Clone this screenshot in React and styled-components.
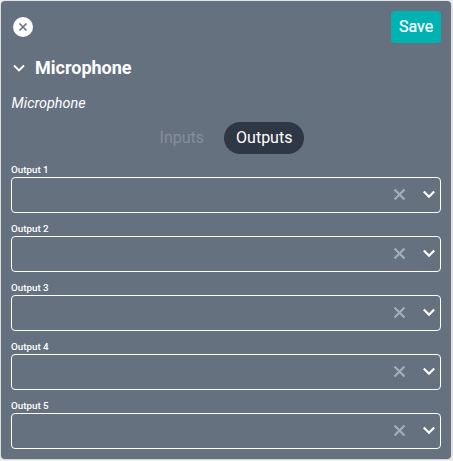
import React from "react";
import styled, { createGlobalStyle } from "styled-components";

const GlobalStyle = createGlobalStyle`
  *, *::before, *::after { box-sizing: border-box; }
  body {
    margin: 0;
    background: #f1f1f1;
    font-family: Roboto, sans-serif;
    color: #fff;
    overflow: hidden;
  }
  button { font: inherit; color: inherit; border: 0; padding: 0; background: none; }
  svg { display: block; flex: none; }
`;

const Panel = styled.main`
  width: 450px;
  height: 458px;
  margin: 1px;
  padding: 10px;
  background: #66717f;
  border-radius: 4px;
  box-shadow: 0 1px 4px rgba(0, 0, 0, 0.2);
`;

const Toolbar = styled.header`
  display: flex;
  align-items: center;
  justify-content: space-between;
  height: 32px;
`;

const CloseButton = styled.button`
  width: 24px;
  height: 24px;
`;

const SaveButton = styled.button`
  width: 50px;
  height: 32px;
  background: #00b2b2;
  border-radius: 4px;
  font-size: 16px;
  font-weight: 400;
  line-height: 20px;
  -webkit-text-stroke: 0.2px #fff;
`;

const SectionHeader = styled.div`
  display: flex;
  align-items: center;
  gap: 8px;
  height: 24px;
  margin-top: 13px;
`;

const Title = styled.h2`
  margin: 0;
  font-size: 18px;
  font-weight: 700;
  line-height: 24px;
`;

const Subtitle = styled.p`
  margin: 14px 0 0;
  padding-left: 0.6px;
  font-size: 14.4px;
  font-style: italic;
  line-height: 20px;
`;

const Tabs = styled.div`
  display: flex;
  justify-content: center;
  gap: 8px;
  height: 32px;
  margin-top: 8px;
`;

const Tab = styled.button`
  height: 32px;
  padding: 0 12px;
  border-radius: 16px;
  font-size: 16px;
  line-height: 32px;
  background: ${({ $active }) => ($active ? "#2f3644" : "transparent")};
  color: ${({ $active }) => ($active ? "#fff" : "#848d9b")};
`;

const Fields = styled.div`
  display: grid;
  gap: 8px;
  margin-top: 8px;
`;

const Field = styled.div`
  height: 51px;
`;

const Label = styled.div`
  height: 15px;
  font-size: 9.8px;
  font-weight: 500;
  line-height: 15px;
`;

const SelectBox = styled.div`
  display: flex;
  align-items: center;
  justify-content: flex-end;
  gap: 9px;
  height: 36px;
  padding: 0 1px 2px 0;
  border: 1px solid #fff;
  border-radius: 4px;
`;

const CloseIcon = () => (
  <svg width="24" height="24" viewBox="0 0 24 24">
    <circle cx="12" cy="12" r="10" fill="#fff" />
    <path d="M8.5 8.5l7 7M15.5 8.5l-7 7" stroke="#66717f" strokeWidth="1.6" />
  </svg>
);

const CollapseIcon = () => (
  <svg width="16" height="16" viewBox="0 0 16 16">
    <path d="M3 5.5l5 5 5-5" fill="none" stroke="#fff" strokeWidth="1.8" />
  </svg>
);

const ClearIcon = () => (
  <svg width="20" height="20" viewBox="0 0 20 20">
    <path d="M4.5 5.5l10 10M14.5 5.5l-10 10" stroke="#a4adbd" strokeWidth="2.2" />
  </svg>
);

const DropdownIcon = () => (
  <svg width="20" height="20" viewBox="0 0 20 20">
    <path d="M4.8 7.5l5.2 5.2 5.2-5.2" fill="none" stroke="#fff" strokeWidth="2.2" />
  </svg>
);

const outputs = ["Output 1", "Output 2", "Output 3", "Output 4", "Output 5"];

export default function App() {
  return (
    <>
      <GlobalStyle />
      <Panel>
        <Toolbar>
          <CloseButton aria-label="Close"><CloseIcon /></CloseButton>
          <SaveButton>Save</SaveButton>
        </Toolbar>
        <SectionHeader>
          <CollapseIcon />
          <Title>Microphone</Title>
        </SectionHeader>
        <Subtitle>Microphone</Subtitle>
        <Tabs>
          <Tab>Inputs</Tab>
          <Tab $active>Outputs</Tab>
        </Tabs>
        <Fields>
          {outputs.map((name) => (
            <Field key={name}>
              <Label>{name}</Label>
              <SelectBox>
                <ClearIcon />
                <DropdownIcon />
              </SelectBox>
            </Field>
          ))}
        </Fields>
      </Panel>
    </>
  );
}
